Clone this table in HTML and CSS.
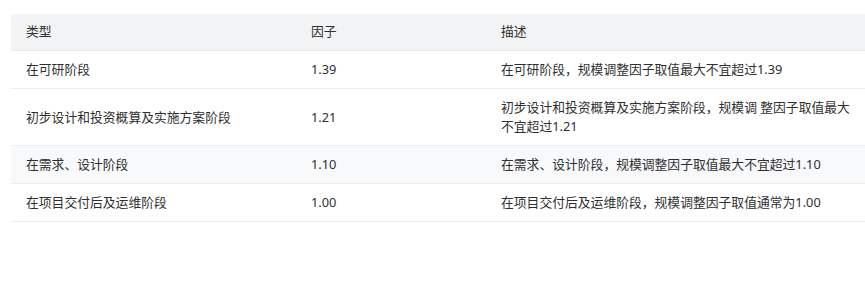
FILE: index.html
```html
<!DOCTYPE html>
<html lang="zh-CN">
<head>
<meta charset="utf-8">
<title>规模调整因子</title>
<link rel="stylesheet" href="styles.css">
</head>
<body>
<div class="wrap">
  <table class="factor-table">
    <colgroup>
      <col class="col-type">
      <col class="col-factor">
      <col class="col-desc">
    </colgroup>
    <thead>
      <tr>
        <th class="first">类型</th>
        <th>因子</th>
        <th>描述</th>
      </tr>
    </thead>
    <tbody>
      <tr>
        <td>在可研阶段</td>
        <td>1.39</td>
        <td class="desc">在可研阶段，规模调整因子取值最大不宜超过1.39</td>
      </tr>
      <tr>
        <td>初步设计和投资概算及实施方案阶段</td>
        <td>1.21</td>
        <td class="desc">初步设计和投资概算及实施方案阶段，规模调 整因子取值最大不宜超过1.21</td>
      </tr>
      <tr class="is-hover">
        <td>在需求、设计阶段</td>
        <td>1.10</td>
        <td class="desc">在需求、设计阶段，规模调整因子取值最大不宜超过1.10</td>
      </tr>
      <tr>
        <td>在项目交付后及运维阶段</td>
        <td>1.00</td>
        <td class="desc">在项目交付后及运维阶段，规模调整因子取值通常为1.00</td>
      </tr>
    </tbody>
  </table>
</div>
</body>
</html>
```
FILE: styles.css
```css
html, body {
  margin: 0;
  padding: 0;
  background: #ffffff;
}

.wrap {
  padding: 14px 0 0 11px;
}

.factor-table {
  width: 854px;
  border-collapse: collapse;
  table-layout: fixed;
  font-family: "Noto Sans", "Noto Sans CJK SC", sans-serif;
  font-size: 12.8px;
  line-height: 19px;
  color: #2f2f2f;
}

.col-type { width: 285px; }
.col-factor { width: 190px; }
.col-desc { width: 379px; }

.factor-table th {
  background: #f2f3f5;
  font-weight: normal;
  text-align: left;
  padding: 8px 15px 9px;
  border-bottom: 1px solid #e8eaee;
  color: #2f2f2f;
}

.factor-table th.first {
  border-top-left-radius: 4px;
}

.factor-table td {
  padding: 9px 15px;
  border-bottom: 1px solid #ebedf0;
  vertical-align: middle;
  text-align: left;
}

.factor-table td.desc {
  padding-right: 10px;
}

.factor-table tr.is-hover td {
  background: #f8f9fa;
}
```
